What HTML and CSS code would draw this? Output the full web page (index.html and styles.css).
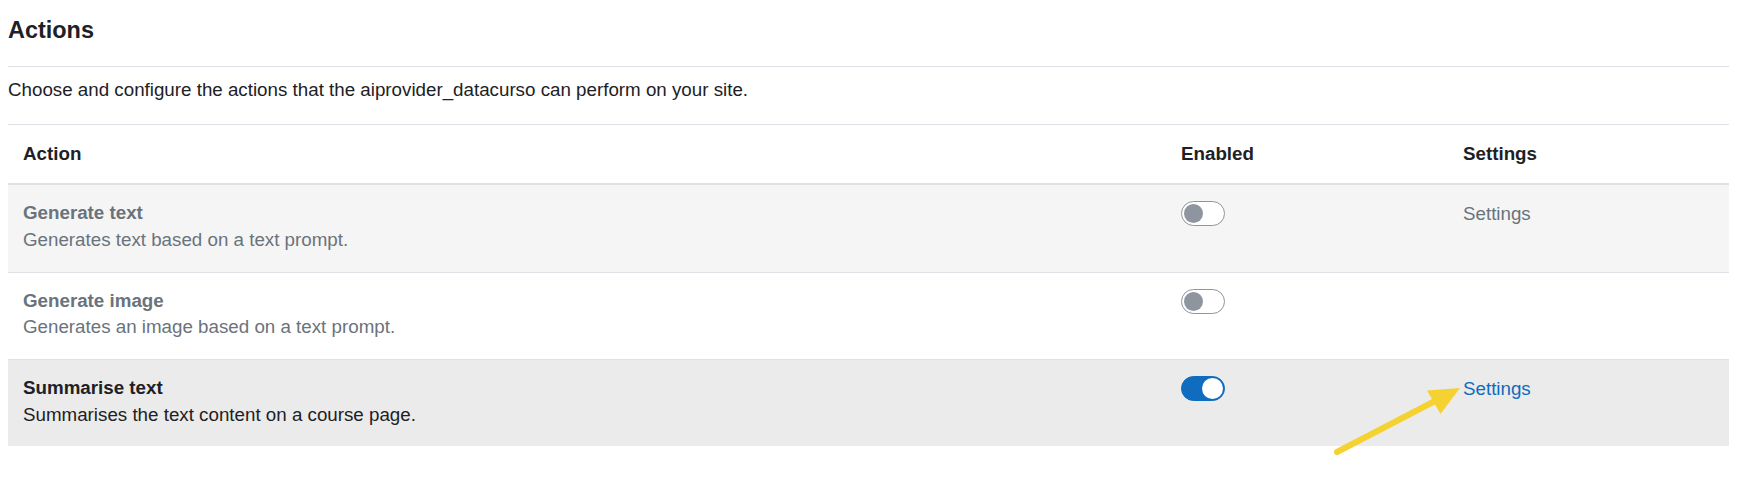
FILE: index.html
```html
<!DOCTYPE html>
<html lang="en">
<head>
<meta charset="utf-8">
<title>Actions</title>
<link rel="stylesheet" href="styles.css">
</head>
<body>
<main class="page">
  <h3 class="page-title">Actions</h3>
  <hr class="rule">
  <p class="intro">Choose and configure the actions that the aiprovider_datacurso can perform on your site.</p>
  <table class="actions">
    <colgroup>
      <col class="col-action">
      <col class="col-enabled">
      <col class="col-settings">
    </colgroup>
    <thead>
      <tr>
        <th>Action</th>
        <th>Enabled</th>
        <th>Settings</th>
      </tr>
    </thead>
    <tbody>
      <tr class="row-striped is-dimmed">
        <td>
          <div class="action-name">Generate text</div>
          <div class="action-desc">Generates text based on a text prompt.</div>
        </td>
        <td><span class="toggle"><span class="knob"></span></span></td>
        <td><span class="settings-link">Settings</span></td>
      </tr>
      <tr class="is-dimmed">
        <td>
          <div class="action-name">Generate image</div>
          <div class="action-desc">Generates an image based on a text prompt.</div>
        </td>
        <td><span class="toggle"><span class="knob"></span></span></td>
        <td></td>
      </tr>
      <tr class="row-hover">
        <td>
          <div class="action-name">Summarise text</div>
          <div class="action-desc">Summarises the text content on a course page.</div>
        </td>
        <td><span class="toggle is-on"><span class="knob"></span></span></td>
        <td><a class="settings-link" href="#">Settings</a></td>
      </tr>
    </tbody>
  </table>
</main>
<svg class="annotation" width="1737" height="503" viewBox="0 0 1737 503" aria-hidden="true">
  <line x1="1337" y1="452" x2="1436" y2="400.5" stroke="#f4d231" stroke-width="6" stroke-linecap="round"/>
  <polygon points="1460,388 1440.5,414 1427,390.5" fill="#f4d231"/>
</svg>
</body>
</html>
```

FILE: styles.css
```css
html, body {
  background: #ffffff;
}

body {
  margin: 8px;
  font-family: "Liberation Sans", Arial, sans-serif;
  font-size: 18.75px;
  line-height: 1.5;
  color: #1d2125;
}

.page {
  display: block;
}

.page-title {
  margin: 8px 0 22px;
  font-size: 23.44px;
  line-height: 1.2;
  font-weight: 700;
  color: #1d2125;
}

.rule {
  margin: 0;
  border: 0;
  border-top: 1px solid #dee2e6;
}

.intro {
  margin: 9px 0 20px;
  line-height: 28.125px;
}

.actions {
  width: 100%;
  border-collapse: collapse;
  table-layout: fixed;
}

.col-action { width: 1158px; }
.col-enabled { width: 282px; }
.col-settings { width: 281px; }

.actions th,
.actions td {
  padding: 15px;
  text-align: left;
  vertical-align: top;
  border-top: 1px solid #dee2e6;
}

.actions th {
  font-weight: 700;
  line-height: 28.125px;
  border-bottom: 2px solid #dee2e6;
}

.row-striped {
  background: #f5f5f5;
}

.row-hover {
  background: #ebebeb;
}

.action-name {
  font-weight: 700;
  line-height: 26.7px;
}

.action-desc {
  line-height: 26.7px;
  margin-bottom: 2.85px;
}

.is-dimmed {
  color: #6a737b;
}

.settings-link {
  display: inline-block;
  line-height: 26.7px;
  color: #6a737b;
  text-decoration: none;
}

a.settings-link {
  color: #0f6cbf;
}

.toggle {
  display: flex;
  align-items: center;
  box-sizing: border-box;
  width: 44px;
  height: 25px;
  margin-top: 1px;
  padding: 0 2px;
  border: 1px solid #8f959e;
  border-radius: 13px;
  background: #ffffff;
}

.toggle .knob {
  width: 19px;
  height: 19px;
  border-radius: 50%;
  background: #8f959e;
}

.toggle.is-on {
  justify-content: flex-end;
  padding: 0 1px;
  border-color: #0f6cbf;
  background: #0f6cbf;
}

.toggle.is-on .knob {
  width: 21px;
  height: 21px;
  background: #ffffff;
}

.annotation {
  position: absolute;
  top: 0;
  left: 0;
  pointer-events: none;
}
```
